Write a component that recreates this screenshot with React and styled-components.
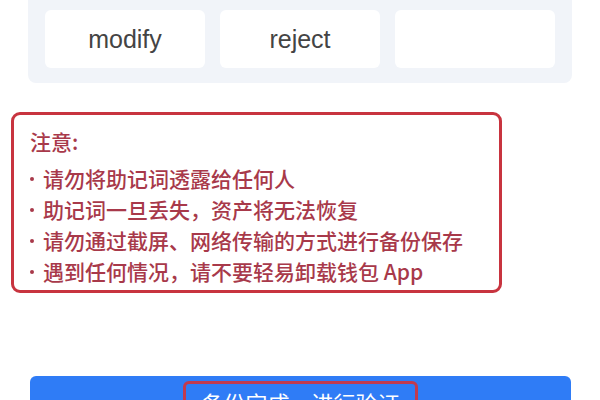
import styled, { createGlobalStyle } from "styled-components";

const GlobalStyle = createGlobalStyle`
  html, body {
    margin: 0;
    padding: 0;
    background: #ffffff;
    overflow: hidden;
  }
  body {
    font-family: "Liberation Sans", "Noto Sans CJK SC", sans-serif;
  }
`;

const Page = styled.div`
  width: 600px;
  height: 400px;
  overflow: hidden;
  display: flex;
  flex-direction: column;
`;

const WordPanel = styled.div`
  margin: 0 28px;
  padding: 10px 17px 15px;
  background: #f1f4f9;
  border-radius: 0 0 8px 8px;
  display: grid;
  grid-template-columns: repeat(3, 1fr);
  gap: 15px;
`;

const WordChip = styled.div`
  height: 58px;
  background: #ffffff;
  border-radius: 6px;
  display: flex;
  align-items: center;
  justify-content: center;
  font-size: 25px;
  color: #444444;
`;

const Notice = styled.div`
  margin: 29px 0 0 11px;
  width: 491px;
  box-sizing: border-box;
  border: 3px solid #c8343f;
  border-radius: 9px;
  padding: 11px 12px 3px 16px;
  color: #a8394a;
  font-family: "Noto Sans CJK SC", sans-serif;
  font-weight: 500;
  font-size: 21px;
  line-height: 31px;
`;

const NoticeTitle = styled.div`
  margin-bottom: 6px;
`;

const NoticeList = styled.ul`
  list-style: none;
  margin: 0;
  padding: 0;
`;

const NoticeItem = styled.li`
  display: flex;
  align-items: center;
  white-space: nowrap;

  &::before {
    content: "";
    width: 4px;
    height: 4px;
    border-radius: 50%;
    background: currentColor;
    margin-right: 9px;
    flex: none;
  }
`;

const ConfirmButton = styled.div`
  margin: 83px 0 0 30px;
  width: 541px;
  height: 60px;
  background: #2f7cf6;
  border-radius: 6px;
  display: flex;
  justify-content: center;
  padding-top: 5px;
  box-sizing: border-box;
`;

const ConfirmLabel = styled.span`
  border: 3px solid #c23a4e;
  border-radius: 6px;
  padding: 1px 15px;
  height: 40px;
  color: #ffffff;
  font-family: "Noto Sans CJK SC", sans-serif;
  font-size: 22px;
  line-height: 34px;
  white-space: nowrap;
`;

const words = ["modify", "reject", ""];

const tips = [
  "请勿将助记词透露给任何人",
  "助记词一旦丢失，资产将无法恢复",
  "请勿通过截屏、网络传输的方式进行备份保存",
  "遇到任何情况，请不要轻易卸载钱包 App",
];

export default function App() {
  return (
    <>
      <GlobalStyle />
      <Page>
        <WordPanel>
          {words.map((w, i) => (
            <WordChip key={i}>{w}</WordChip>
          ))}
        </WordPanel>

        <Notice>
          <NoticeTitle>注意:</NoticeTitle>
          <NoticeList>
            {tips.map((t) => (
              <NoticeItem key={t}>{t}</NoticeItem>
            ))}
          </NoticeList>
        </Notice>

        <ConfirmButton>
          <ConfirmLabel>备份完成，进行验证</ConfirmLabel>
        </ConfirmButton>
      </Page>
    </>
  );
}
